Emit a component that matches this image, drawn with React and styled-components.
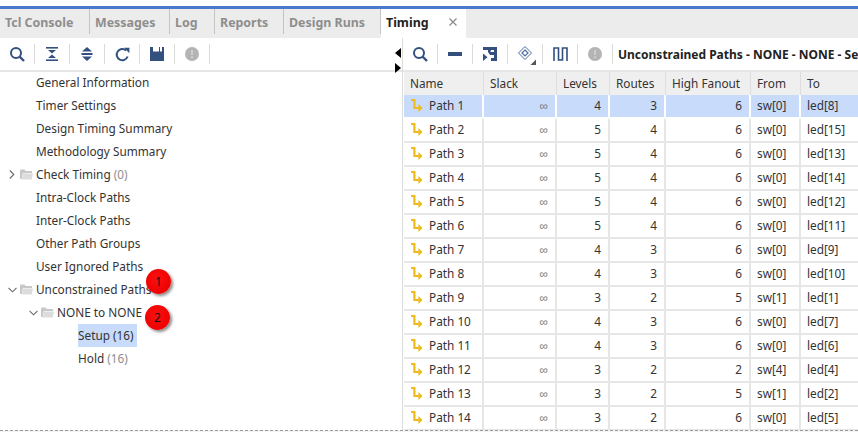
import React from "react";
import styled, { createGlobalStyle } from "styled-components";

const Global = createGlobalStyle`
  html, body { margin: 0; padding: 0; background: #fff; overflow: hidden; }
  body { font-family: "Noto Sans", sans-serif; font-size: 11.8px; color: #333; }
`;

const Page = styled.div`
  position: relative;
  width: 858px;
  height: 432px;
  overflow: hidden;
  padding-top: 6px;
  box-sizing: border-box;
  display: flex;
  flex-direction: column;
`;
const TabBar = styled.div`
  height: 29px;
  border-top: 3px solid #4a7acb;
  background: #ececec;
  display: flex;
  flex: none;
`;
const Tab = styled.div`
  width: ${(p) => p.$w}px;
  box-sizing: border-box;
  display: flex;
  align-items: center;
  padding: 1px 0 ${(p) => (p.$active ? 4 : 0)}px 5px;
  font-size: 12.4px;
  font-weight: 700;
  color: ${(p) => (p.$active ? "#222" : "#8e8e8e")};
  background: ${(p) => (p.$active ? "#fff" : "transparent")};
  border-right: ${(p) => (p.$active ? "none" : "1px solid #c4c4c4")};
  margin-bottom: ${(p) => (p.$active ? 0 : 4)}px;
`;
const TabClose = styled.span`
  margin-left: auto;
  margin-right: 9px;
  display: flex;
`;
const Panes = styled.div`
  flex: 1;
  display: flex;
  min-height: 0;
`;
const LeftPane = styled.div`
  width: 403px;
  flex: none;
  display: flex;
  flex-direction: column;
  border-right: 1px solid #dcdcdc;
  box-sizing: border-box;
`;
const RightPane = styled.div`
  flex: 1;
  min-width: 0;
  overflow: hidden;
  display: flex;
  flex-direction: column;
`;
const Toolbar = styled.div`
  height: 32px;
  flex: none;
  display: flex;
  align-items: center;
  border-bottom: 2px solid #e6e6e6;
`;
const ToolButton = styled.div`
  width: 34px;
  height: 20px;
  border-right: 1px solid #dadada;
  display: flex;
  align-items: center;
  justify-content: center;
  flex: none;
`;
const TableTitle = styled.div`
  margin-left: 5px;
  font-size: 12px;
  font-weight: 700;
  color: #222;
  white-space: nowrap;
`;
const Tree = styled.div`
  display: flex;
  flex-direction: column;
  margin-top: -1px;
`;
const TreeRow = styled.div`
  height: 23px;
  line-height: 23px;
  display: flex;
  align-items: center;
  padding-left: ${(p) => p.$indent}px;
  white-space: nowrap;
  color: #333;
`;
const TreeLabel = styled.span`
  background: ${(p) => (p.$selected ? "#c8dbfb" : "transparent")};
  padding-right: 3px;
`;
const Count = styled.span`
  color: #8e8e8e;
`;
const Chevron = styled.span`
  width: 12px;
  display: flex;
  justify-content: center;
  margin-right: 2px;
  flex: none;
`;
const FolderSlot = styled.span`
  width: 13px;
  margin-right: 3px;
  display: flex;
  flex: none;
`;
const Table = styled.div`
  display: flex;
  flex-direction: column;
  width: 520px;
  margin-left: 1px;
`;
const Columns = "80px 73px 53px 56px 85px 50px 120px";
const HeadRow = styled.div`
  display: grid;
  grid-template-columns: ${Columns};
  height: 23px;
  background: #efefef;
`;
const HeadCell = styled.div`
  display: flex;
  align-items: center;
  padding: 0 0 2px 6px;
  border-right: 1px solid #dedede;
  color: #333;
  white-space: nowrap;
`;
const Row = styled.div`
  display: grid;
  grid-template-columns: ${Columns};
  height: 24px;
  box-sizing: border-box;
  background: ${(p) => (p.$selected ? "#c8dbfb" : "#fff")};
  border-bottom: 2px solid ${(p) => (p.$selected ? "#fff" : "#e6e6e6")};
`;
const Cell = styled.div`
  display: flex;
  align-items: center;
  justify-content: ${(p) => (p.$right ? "flex-end" : "flex-start")};
  padding: ${(p) => (p.$right ? "0 7px 2px 0" : "0 0 2px 6px")};
  border-right: 2px solid ${(p) => (p.$selected ? "#fff" : "#e6e6e6")};
  color: ${(p) => (p.$muted ? "#777" : "#333")};
  white-space: nowrap;
  box-sizing: border-box;
`;
const NameCell = styled(Cell)`
  padding-left: 6px;
  gap: 6px;
`;
const Footer = styled.div`
  position: absolute;
  left: 0;
  right: 0;
  top: 430px;
  height: 2px;
  background: #f4f4f4;
  border-top: 1px dashed #9a9a9a;
`;
const Badge = styled.div`
  position: absolute;
  left: ${(p) => p.$x}px;
  top: ${(p) => p.$y}px;
  width: 25px;
  height: 25px;
  border-radius: 50%;
  background: radial-gradient(circle at 45% 40%, #fa0f0f, #ee0000 75%, #d80000);
  box-shadow: 2px 2px 3px rgba(0, 0, 0, 0.45);
  color: #111;
  display: flex;
  align-items: center;
  justify-content: center;
  font-size: 12px;
`;
const SplitArrow = styled.svg`
  position: absolute;
  left: 395px;
  top: ${(p) => p.$y}px;
`;

const BLUE = "#33507f";

const SearchIcon = () => (
  <svg width="16" height="16" viewBox="0 0 16 16" fill="none">
    <circle cx="7" cy="7" r="5" stroke={BLUE} strokeWidth="2" />
    <path d="M10.5 10.5L15 15" stroke={BLUE} strokeWidth="2.4" />
  </svg>
);
const CollapseIcon = () => (
  <svg width="14" height="16" viewBox="0 0 14 16" fill={BLUE}>
    <rect x="1" y="1" width="12" height="1.6" />
    <rect x="1" y="13.4" width="12" height="1.6" />
    <path d="M3 4h8L7 7.6zM3 12h8L7 8.4z" />
  </svg>
);
const ExpandIcon = () => (
  <svg width="12" height="16" viewBox="0 0 12 16" fill={BLUE}>
    <rect x="0.5" y="7" width="11" height="2" />
    <path d="M1 5.6L6 1l5 4.6zM1 10.4h10L6 15z" />
  </svg>
);
const RefreshIcon = () => (
  <svg width="15" height="15" viewBox="0 0 15 15" fill="none">
    <path d="M12.6 9.5A5.6 5.6 0 1 1 11 3.4" stroke={BLUE} strokeWidth="2" />
    <path d="M9 .8h5.4v5.4z" fill={BLUE} />
  </svg>
);
const SaveIcon = () => (
  <svg width="14" height="14" viewBox="0 0 14 14">
    <path d="M0 0h3v4.5h6V0h1v4.5h2V0h2v14H0z" fill={BLUE} />
  </svg>
);
const StopIcon = () => (
  <svg width="14" height="14" viewBox="0 0 14 14">
    <circle cx="7" cy="7" r="7" fill="#b4b4b4" />
    <rect x="6" y="3" width="2" height="5" fill="#cdcdcd" />
    <rect x="6" y="9.2" width="2" height="2" fill="#cdcdcd" />
  </svg>
);
const MinusIcon = () => (
  <svg width="14" height="4" viewBox="0 0 14 4">
    <rect width="14" height="4" fill={BLUE} />
  </svg>
);
const HierIcon = () => (
  <svg width="14" height="14" viewBox="0 0 14 14" fill={BLUE}>
    <path d="M0 0h14v14H8v-3h3V8H7L5 5V3H0z" />
    <path d="M8 3h3v2H7.5z" fill="#fff" />
    <path d="M0 6.5l4.5 3.7L0 14z" />
  </svg>
);
const DiamondIcon = () => (
  <svg width="18" height="18" viewBox="0 0 18 18" fill="none" style={{ overflow: "visible" }}>
    <path d="M9 1.5l6.5 6.5L9 14.5 2.5 8z" stroke="#4d6a9c" strokeWidth="1" />
    <path d="M9 5l3 3-3 3-3-3z" stroke="#4d6a9c" strokeWidth="1.2" />
    <path d="M20 14.5V20h-5.5z" fill="#555" />
  </svg>
);
const WaveIcon = () => (
  <svg width="15" height="14" viewBox="0 0 15 14" fill="none">
    <path d="M1 14V1h4.5v12h4V1H14v13" stroke={BLUE} strokeWidth="1.6" />
  </svg>
);
const CloseIcon = () => (
  <svg width="8" height="8" viewBox="0 0 8 8">
    <path d="M.5.5l7 7M7.5.5l-7 7" stroke="#8a8a8a" strokeWidth="1.2" />
  </svg>
);
const ChevronDown = () => (
  <svg width="9" height="6" viewBox="0 0 9 6" fill="none">
    <path d="M.5.8l4 4 4-4" stroke="#6a6a6a" strokeWidth="1.1" />
  </svg>
);
const ChevronRight = () => (
  <svg width="6" height="9" viewBox="0 0 6 9" fill="none">
    <path d="M.8.5l4 4-4 4" stroke="#6a6a6a" strokeWidth="1.1" />
  </svg>
);
const FolderIcon = () => (
  <svg width="13" height="11" viewBox="0 0 13 11">
    <path d="M0 1.5A1 1 0 0 1 1 .5h3.5l1.2 1.5H12v2H3L1.6 10H0z" fill="#c8c8c8" />
    <path d="M3.3 4.6H13L11.6 10.5H1.8z" fill="#dcdcdc" />
  </svg>
);
const PathIcon = () => (
  <svg width="13" height="13" viewBox="0 0 13 13" fill="none">
    <path d="M1 1h3.4v8H9" stroke="#eebc1e" strokeWidth="2.2" />
    <path d="M8.4 5l4.2 4-4.2 4z" fill="#eebc1e" />
  </svg>
);

const tabs = [
  ["Tcl Console", 90],
  ["Messages", 80],
  ["Log", 45],
  ["Reports", 69],
  ["Design Runs", 97],
];

const paths = [
  [1, 4, 3, 6, "sw[0]", "led[8]"],
  [2, 5, 4, 6, "sw[0]", "led[15]"],
  [3, 5, 4, 6, "sw[0]", "led[13]"],
  [4, 5, 4, 6, "sw[0]", "led[14]"],
  [5, 5, 4, 6, "sw[0]", "led[12]"],
  [6, 5, 4, 6, "sw[0]", "led[11]"],
  [7, 4, 3, 6, "sw[0]", "led[9]"],
  [8, 4, 3, 6, "sw[0]", "led[10]"],
  [9, 3, 2, 5, "sw[1]", "led[1]"],
  [10, 4, 3, 6, "sw[0]", "led[7]"],
  [11, 4, 3, 6, "sw[0]", "led[6]"],
  [12, 3, 2, 2, "sw[4]", "led[4]"],
  [13, 3, 2, 5, "sw[1]", "led[2]"],
  [14, 3, 2, 6, "sw[0]", "led[5]"],
];

const headers = ["Name", "Slack", "Levels", "Routes", "High Fanout", "From", "To"];

export default function App() {
  return (
    <Page>
      <Global />
      <TabBar>
        {tabs.map(([name, w]) => (
          <Tab key={name} $w={w}>{name}</Tab>
        ))}
        <Tab $w={85} $active>
          Timing
          <TabClose><CloseIcon /></TabClose>
        </Tab>
      </TabBar>
      <Panes>
        <LeftPane>
          <Toolbar>
            <ToolButton><SearchIcon /></ToolButton>
            <ToolButton><CollapseIcon /></ToolButton>
            <ToolButton><ExpandIcon /></ToolButton>
            <ToolButton><RefreshIcon /></ToolButton>
            <ToolButton><SaveIcon /></ToolButton>
            <ToolButton><StopIcon /></ToolButton>
          </Toolbar>
          <Tree>
            <TreeRow $indent={36}>General Information</TreeRow>
            <TreeRow $indent={36}>Timer Settings</TreeRow>
            <TreeRow $indent={36}>Design Timing Summary</TreeRow>
            <TreeRow $indent={36}>Methodology Summary</TreeRow>
            <TreeRow $indent={6}>
              <Chevron><ChevronRight /></Chevron>
              <FolderSlot><FolderIcon /></FolderSlot>
              <span>Check Timing <Count>(0)</Count></span>
            </TreeRow>
            <TreeRow $indent={36}>Intra-Clock Paths</TreeRow>
            <TreeRow $indent={36}>Inter-Clock Paths</TreeRow>
            <TreeRow $indent={36}>Other Path Groups</TreeRow>
            <TreeRow $indent={36}>User Ignored Paths</TreeRow>
            <TreeRow $indent={6}>
              <Chevron><ChevronDown /></Chevron>
              <FolderSlot><FolderIcon /></FolderSlot>
              <span>Unconstrained Paths</span>
            </TreeRow>
            <TreeRow $indent={27}>
              <Chevron><ChevronDown /></Chevron>
              <FolderSlot><FolderIcon /></FolderSlot>
              <span>NONE to NONE</span>
            </TreeRow>
            <TreeRow $indent={78}>
              <TreeLabel $selected>Setup (16)</TreeLabel>
            </TreeRow>
            <TreeRow $indent={78}>
              <TreeLabel>Hold <Count>(16)</Count></TreeLabel>
            </TreeRow>
          </Tree>
        </LeftPane>
        <RightPane>
          <Toolbar>
            <ToolButton><SearchIcon /></ToolButton>
            <ToolButton><MinusIcon /></ToolButton>
            <ToolButton><HierIcon /></ToolButton>
            <ToolButton><DiamondIcon /></ToolButton>
            <ToolButton><WaveIcon /></ToolButton>
            <ToolButton><StopIcon /></ToolButton>
            <TableTitle>Unconstrained Paths - NONE - NONE - Setup</TableTitle>
          </Toolbar>
          <Table>
            <HeadRow>
              {headers.map((h) => (
                <HeadCell key={h}>{h}</HeadCell>
              ))}
            </HeadRow>
            {paths.map(([n, levels, routes, fanout, from, to], i) => {
              const sel = i === 0;
              return (
                <Row key={n} $selected={sel}>
                  <NameCell $selected={sel}><PathIcon />Path {n}</NameCell>
                  <Cell $right $muted $selected={sel}>∞</Cell>
                  <Cell $right $selected={sel}>{levels}</Cell>
                  <Cell $right $selected={sel}>{routes}</Cell>
                  <Cell $right $selected={sel}>{fanout}</Cell>
                  <Cell $selected={sel}>{from}</Cell>
                  <Cell $selected={sel}>{to}</Cell>
                </Row>
              );
            })}
          </Table>
        </RightPane>
      </Panes>
      <SplitArrow $y={48} width="6" height="10" viewBox="0 0 6 10"><path d="M6 0v10L0 5z" fill="#000" /></SplitArrow>
      <SplitArrow $y={63} width="6" height="10" viewBox="0 0 6 10"><path d="M0 0v10l6-5z" fill="#000" /></SplitArrow>
      <Badge $x={146} $y={269}>1</Badge>
      <Badge $x={145} $y={305}>2</Badge>
      <Footer />
    </Page>
  );
}
